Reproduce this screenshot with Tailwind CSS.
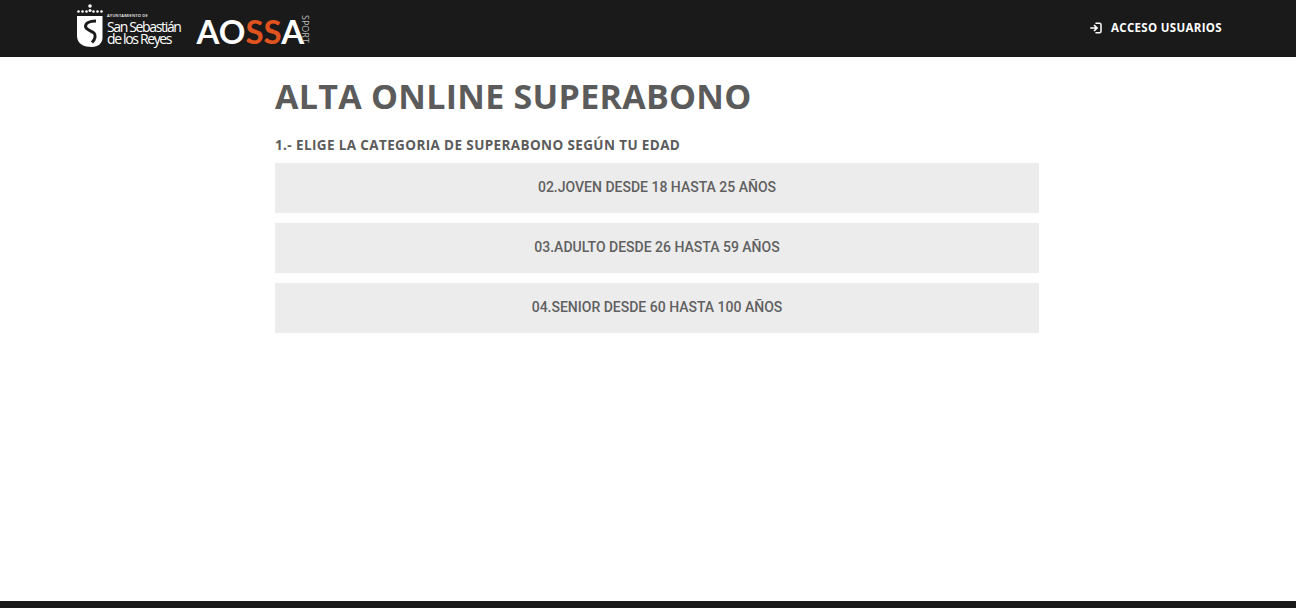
<!DOCTYPE html>
<html lang="es">
<head>
    <meta charset="UTF-8">
    <title>Alta online superabono</title>
    <script src="https://cdn.jsdelivr.net/npm/@tailwindcss/browser@4"></script>
</head>
<body class="bg-white h-[608px] overflow-hidden flex flex-col font-['Open_Sans',sans-serif]">

    <!-- Header -->
    <header class="h-[57px] bg-[#1a1a1a] flex items-center justify-between pl-[77px] pr-[74px] shrink-0">
        <div class="flex items-center">
            <!-- Ayuntamiento logo -->
            <svg class="w-[26px] h-[44px] mb-[5px]" viewBox="0 0 26 44" fill="#fff">
                <circle cx="13" cy="2" r="1.800"/>
                <circle cx="1.500" cy="7.500" r="1.300"/><circle cx="5.500" cy="7.500" r="1.300"/><circle cx="9.500" cy="7.500" r="1.300"/><circle cx="13" cy="6.500" r="1.500"/><circle cx="16.500" cy="7.500" r="1.300"/><circle cx="20.500" cy="7.500" r="1.300"/><circle cx="24.500" cy="7.500" r="1.300"/>
                <path d="M0 12H25.500V34C25.500 39 21 43 15 43C7 43 0 40 0 32Z"/>
                <path d="M19 17C12 17 8.500 19.500 8.500 22.500C9 26 15 27 17 29C19 31 18.500 35 15 38.500" fill="none" stroke="#1a1a1a" stroke-width="3"/>
            </svg>
            <div class="ml-[4px] mt-[2px] text-white font-['Open_Sans',sans-serif] leading-none">
                <div class="text-[4px] font-semibold tracking-[0.2px] mb-[2px]">AYUNTAMIENTO DE</div>
                <div class="text-[14px] tracking-[-1.35px] leading-[13px] whitespace-nowrap">San Sebastián</div>
                <div class="text-[14px] tracking-[-1.35px] leading-[13px] -mt-[1px] whitespace-nowrap">de los Reyes</div>
            </div>
            <!-- AOSSA logo -->
            <div class="ml-[16px] flex items-center mt-[6px]">
                <span class="font-['Lato',sans-serif] font-bold text-[33px] leading-none text-white">AO<span class="text-[#e0531f]">SS</span>A</span>
                <span class="[writing-mode:vertical-rl] text-[9px] leading-none text-[#bbbbbb] font-['Open_Sans',sans-serif] -ml-[3px] -mt-[6px]">SPORT</span>
            </div>
        </div>
        <a class="flex items-center gap-[9px] mb-[2px] text-white text-[11.5px] font-bold tracking-[0.33px]">
            <svg class="w-[12px] h-[12px]" viewBox="0 0 12 12" fill="none" stroke="#fff" stroke-linecap="round">
                <path d="M0.800 6H6.500M4.500 3.500L7 6L4.500 8.500" stroke-width="1.700"/>
                <path d="M6 1.200H9.500Q11 1.200 11 2.700V9.300Q11 10.800 9.500 10.800H6" stroke-width="1.500"/>
            </svg>
            ACCESO USUARIOS
        </a>
    </header>

    <!-- Main -->
    <main class="flex-1 pl-[275px] w-[1039px] box-content">
        <h1 class="mt-[19px] text-[34px] leading-[40px] font-bold text-[#5b5b5b] tracking-[0.27px] whitespace-nowrap">ALTA ONLINE SUPERABONO</h1>
        <h2 class="mt-[20px] text-[13.5px] leading-[18px] font-bold text-[#5b5b5b] tracking-[0.38px] whitespace-nowrap">1.- ELIGE LA CATEGORIA DE SUPERABONO SEGÚN TU EDAD</h2>
        <div class="mt-[9px] w-[764px] flex flex-col gap-[10px]">
            <a class="h-[50px] bg-[#ececec] flex items-center justify-center text-[14px] font-medium text-[#606060] font-['Roboto',sans-serif] pb-[2px]">02.JOVEN DESDE 18 HASTA 25 AÑOS</a>
            <a class="h-[50px] bg-[#ececec] flex items-center justify-center text-[14px] font-medium text-[#606060] font-['Roboto',sans-serif] pb-[2px]">03.ADULTO DESDE 26 HASTA 59 AÑOS</a>
            <a class="h-[50px] bg-[#ececec] flex items-center justify-center text-[14px] font-medium text-[#606060] font-['Roboto',sans-serif] pb-[2px]">04.SENIOR DESDE 60 HASTA 100 AÑOS</a>
        </div>
    </main>

    <!-- Footer -->
    <footer class="h-[7px] bg-[#1a1a1a] shrink-0"></footer>

</body>
</html>
